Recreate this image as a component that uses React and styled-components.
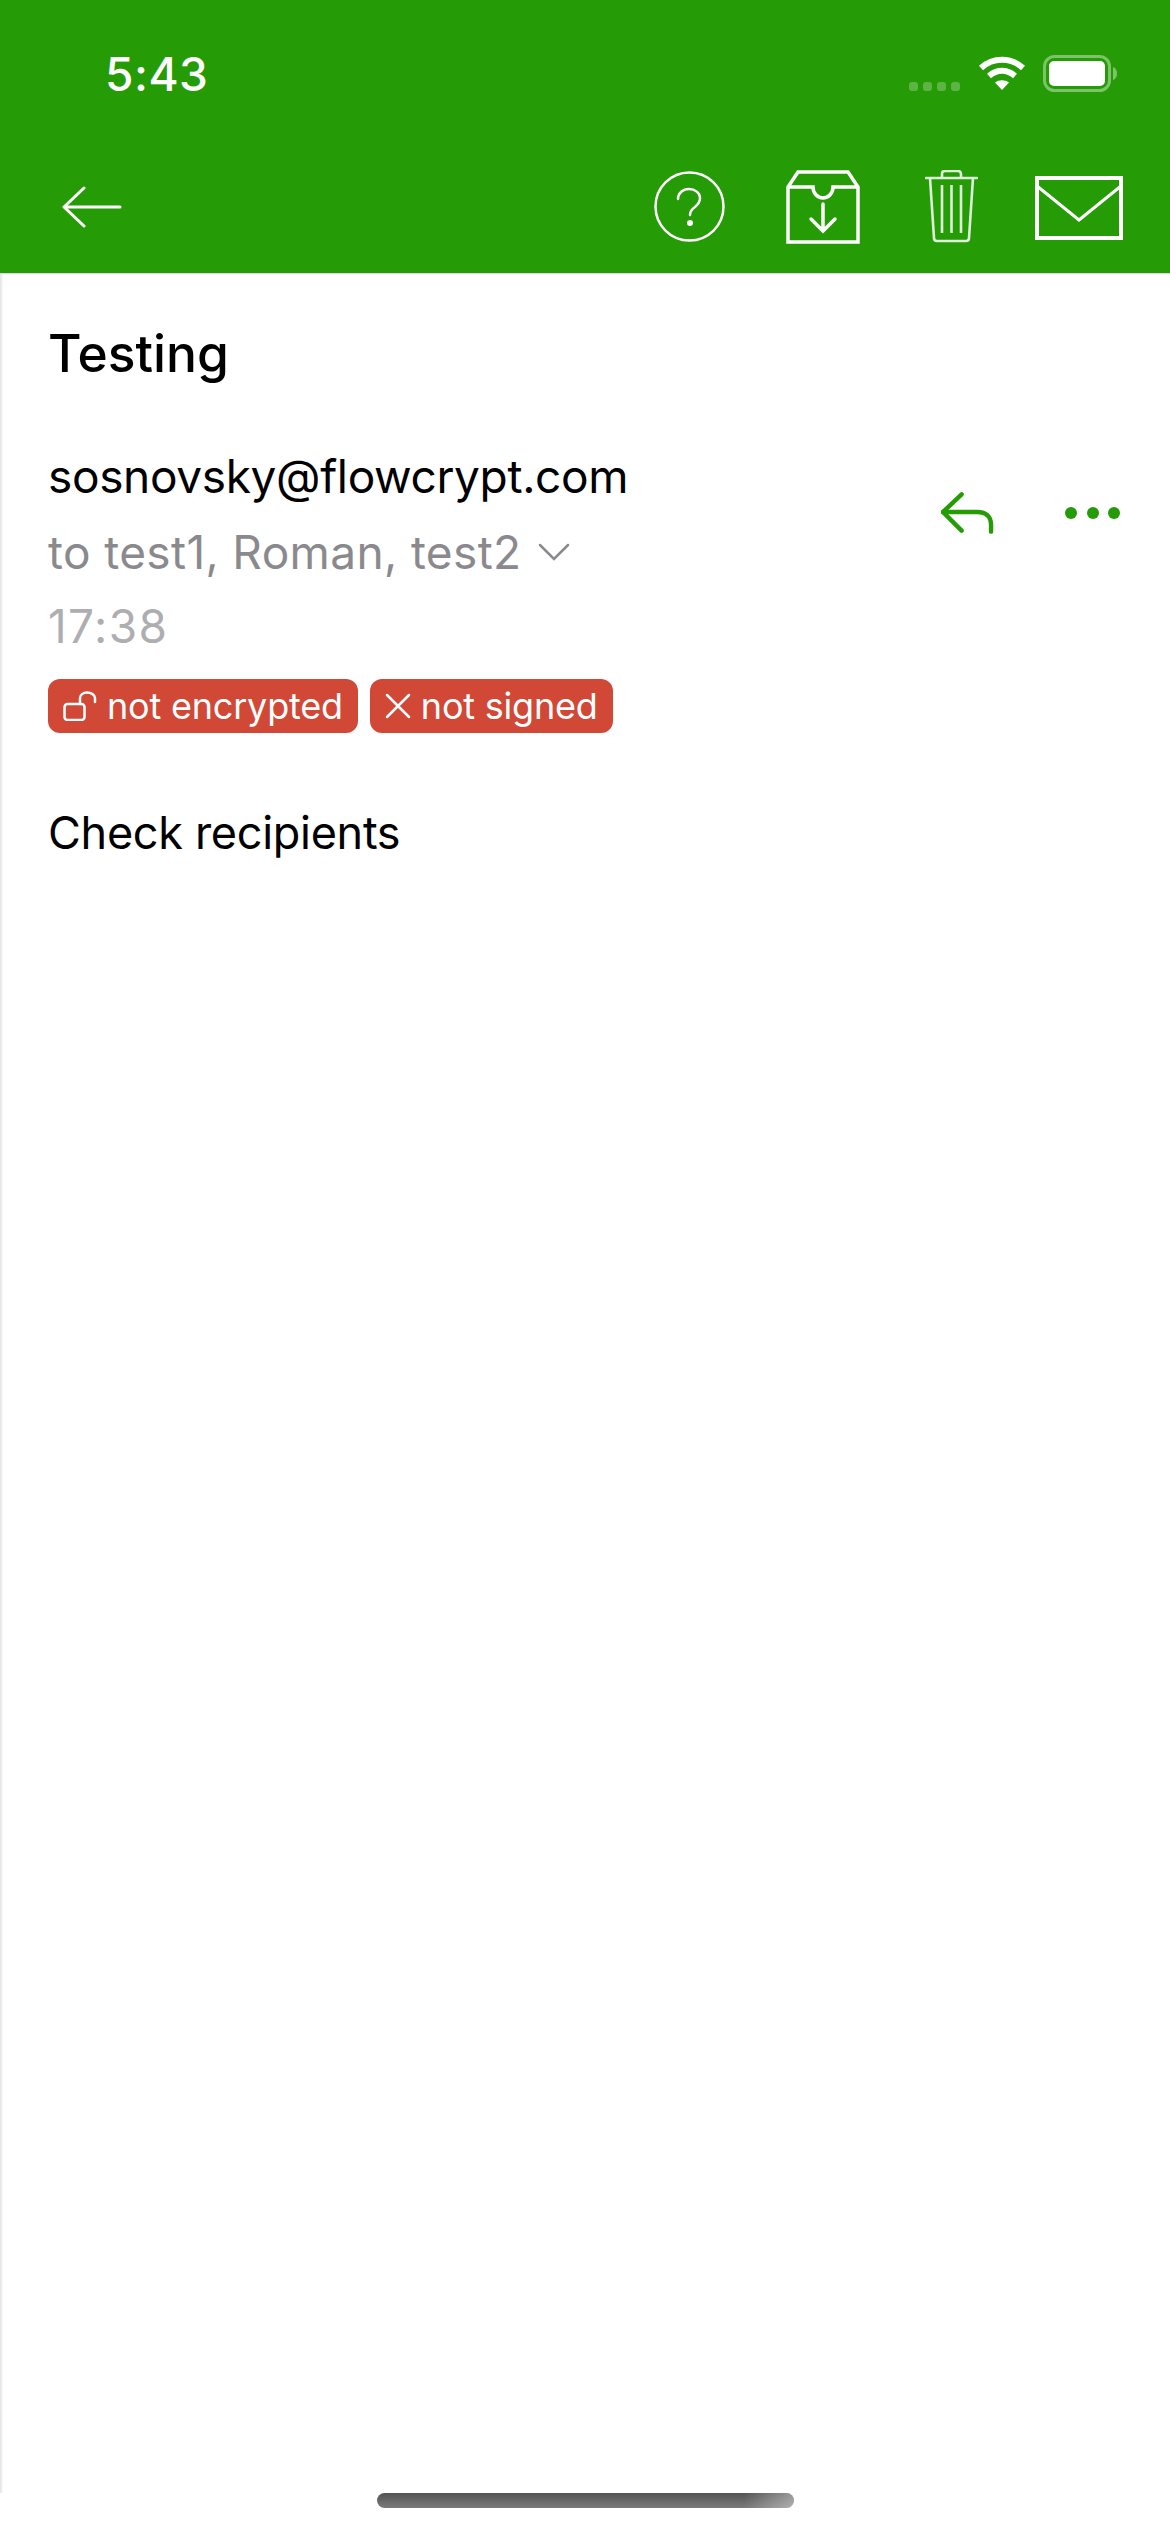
import styled, { createGlobalStyle } from 'styled-components'

const GlobalStyle = createGlobalStyle`
    html, body {
        margin: 0;
        padding: 0;
        background: #fff;
    }
    body {
        font-family: Inter, "Liberation Sans", sans-serif;
    }
`

const Screen = styled.div`
    width: 1170px;
    height: 2532px;
    display: flex;
    flex-direction: column;
    overflow: hidden;
    background: #fff;
`

const Header = styled.header`
    background: #259b06;
    border-bottom: 1px solid #d9d9d9;
    height: 274px;
    box-sizing: border-box;
    color: #fff;
`

const StatusBar = styled.div`
    height: 136px;
    box-sizing: border-box;
    padding: 55px 51px 0 105px;
    display: flex;
    justify-content: space-between;
    align-items: flex-start;
`

const Clock = styled.div`
    font-size: 46px;
    line-height: 38px;
    font-weight: 500;
    letter-spacing: 0.5px;
`

const StatusIcons = styled.div`
    display: flex;
    align-items: flex-start;
    gap: 16px;
`

const NavBar = styled.nav`
    height: 136px;
    box-sizing: border-box;
    padding: 34px 47px 0 62px;
    display: flex;
    align-items: flex-start;
`

const BackButton = styled.div`
    margin-top: 16px;
    margin-right: auto;
    line-height: 0;
`

const NavAction = styled.div`
    margin-left: ${props => props.$gap}px;
    margin-top: ${props => props.$top || 0}px;
    line-height: 0;
`

const Body = styled.main`
    flex: 1;
    display: flex;
    flex-direction: column;
    padding: 52px 49px 0 48px;
    box-shadow: inset 3px 0 2px -1px #e6e6e6;
`

const Subject = styled.h1`
    margin: 0;
    font-size: 51.5px;
    line-height: 54px;
    font-weight: 500;
    color: #000;
`

const SenderRow = styled.div`
    display: flex;
    justify-content: space-between;
    align-items: flex-start;
    margin-top: 63px;
`

const SenderInfo = styled.div`
    display: flex;
    flex-direction: column;
`

const SenderEmail = styled.div`
    font-size: 46px;
    line-height: 66px;
    letter-spacing: -0.35px;
    color: #000;
`

const Recipients = styled.div`
    display: flex;
    align-items: center;
    font-size: 46px;
    line-height: 66px;
    letter-spacing: 0.36px;
    margin-top: 10px;
    color: #8a8a8e;
`

const Chevron = styled.span`
    margin-left: 16px;
    line-height: 0;
`

const Time = styled.div`
    font-size: 46px;
    line-height: 66px;
    letter-spacing: 1.4px;
    margin-top: 8px;
    color: #aeaeb2;
`

const MessageActions = styled.div`
    display: flex;
    align-items: center;
    gap: 71px;
    margin-top: 48px;
`

const Badges = styled.div`
    display: flex;
    gap: 12px;
    margin-top: 20px;
`

const Badge = styled.div`
    display: flex;
    align-items: center;
    height: 54px;
    box-sizing: border-box;
    padding: 0 15px;
    gap: 10px;
    border-radius: 12px;
    background: #d14836;
    color: #fff;
    font-size: 36px;
    letter-spacing: -0.2px;
`

const BadgeIcon = styled.span`
    line-height: 0;
`

const MessageBody = styled.p`
    margin: 67px 0 0 0;
    font-size: 45px;
    line-height: 66px;
    letter-spacing: -0.3px;
    color: #000;
`

const HomeIndicator = styled.div`
    align-self: center;
    width: 417px;
    height: 15px;
    margin-bottom: 24px;
    border-radius: 8px;
    background: linear-gradient(180deg, #545454, #7a7a7a);
    position: relative;
    overflow: hidden;

    &::after {
        content: '';
        position: absolute;
        top: 0;
        right: 0;
        bottom: 0;
        width: 50px;
        background: linear-gradient(90deg, rgba(255,255,255,0), rgba(255,255,255,.4));
    }
`

const BackIcon = () => (
    <svg width="60" height="42" viewBox="0 0 60 42" fill="none" stroke="#fff" strokeWidth="3" strokeLinecap="round" strokeLinejoin="round">
        <path d="M58 21H2M22 2 2 21l20 19" />
    </svg>
)

const HelpIcon = () => (
    <svg width="71" height="71" viewBox="0 0 71 71" fill="none" stroke="#fff" strokeWidth="2.5">
        <circle cx="35.5" cy="35.5" r="34" />
        <path d="M24 28c0-6 5-10 11-10 6 0 11 4 11 9 0 5-3 7-5 9-3 2-5 4-5 8" strokeLinecap="round" />
        <circle cx="36" cy="52" r="3" fill="#fff" stroke="none" />
    </svg>
)

const ArchiveIcon = () => (
    <svg width="74" height="74" viewBox="0 0 74 74" fill="none" stroke="#fff" strokeWidth="3.5">
        <path d="M2 17 12 2h50l10 15v55H2z" />
        <path d="M2 17h25a10 11 0 0 0 20 0h25" />
        <path d="M37 34v27M25 49l12 12 12-12" strokeLinecap="round" />
    </svg>
)

const TrashIcon = () => (
    <svg width="53" height="74" viewBox="0 0 53 74" fill="none" stroke="#fff" strokeWidth="2.6" opacity=".85">
        <path d="M1 8h51" strokeLinecap="round" />
        <path d="M17 8V4c0-2 1-3 3-3h13c2 0 3 1 3 3v4" />
        <path d="M5 8l4 60c0 2 1 3 3 3h29c2 0 3-1 3-3l4-60" />
        <path d="M17 15v48M26.5 15v48M36 15v48" />
    </svg>
)

const MailIcon = () => (
    <svg width="88" height="64" viewBox="0 0 88 64" fill="none" stroke="#fff" strokeWidth="4">
        <rect x="2" y="2" width="84" height="60" />
        <path d="M2 10l42 34 42-34" strokeWidth="3" />
    </svg>
)

const SignalDots = () => (
    <svg width="52" height="10" viewBox="0 0 52 10" fill="#fff" opacity=".25" style={{ marginTop: 27 }}>
        <rect x="0" y="0" width="9" height="9" rx="3" />
        <rect x="14" y="0" width="9" height="9" rx="3" />
        <rect x="28" y="0" width="9" height="9" rx="3" />
        <rect x="42" y="0" width="9" height="9" rx="3" />
    </svg>
)

const WifiIcon = () => (
    <svg width="50" height="36" viewBox="0 0 48 36" fill="none" stroke="#fff" strokeWidth="6">
        <path d="M3 13C15 2 33 2 45 13" />
        <path d="M11 21c8-7 18-7 26 0" />
        <path d="M17 27.5 24 35l7-7.500c-4-3-10-3-14 0z" fill="#fff" stroke="none" />
    </svg>
)

const BatteryIcon = () => (
    <svg width="76" height="38" viewBox="0 0 76 38" fill="none">
        <rect x="1.5" y="1.5" width="65" height="34" rx="10" stroke="#fff" strokeWidth="3" opacity=".4" />
        <rect x="6" y="6" width="56" height="25" rx="5" fill="#fff" />
        <path d="M70 12c3 1 4 4 4 6.5s-1 5.500-4 6.500z" fill="#fff" opacity=".4" />
    </svg>
)

const ChevronIcon = () => (
    <svg width="32" height="18" viewBox="0 0 32 18" fill="none" stroke="#8a8a8e" strokeWidth="2.5" strokeLinecap="round">
        <path d="M2 2l14 14L30 2" />
    </svg>
)

const ReplyIcon = () => (
    <svg width="53" height="44" viewBox="0 0 54 44" fill="none" stroke="#259b06" strokeWidth="4.5" strokeLinecap="round" strokeLinejoin="round">
        <path d="M21 3 2 21l19 19" />
        <path d="M2 21h35c9 0 14 5 14 13v7" />
    </svg>
)

const MoreIcon = () => (
    <svg width="56" height="12" viewBox="0 0 56 12" fill="#259b06">
        <circle cx="6" cy="6" r="6" />
        <circle cx="28" cy="6" r="6" />
        <circle cx="49" cy="6" r="6" />
    </svg>
)

const OpenLockIcon = () => (
    <svg width="34" height="30" viewBox="0 0 34 30" fill="none" stroke="#fff" strokeWidth="2.5">
        <rect x="1.5" y="13" width="20" height="16" rx="3" />
        <path d="M17 13V7c0-3 3-5.500 7-5.500S32 4 32 7v4" strokeLinecap="round" />
    </svg>
)

const CrossIcon = () => (
    <svg width="26" height="26" viewBox="0 0 26 26" fill="none" stroke="#fff" strokeWidth="2.5" strokeLinecap="round">
        <path d="M2 2l22 22M24 2 2 24" />
    </svg>
)

const App = () => {
    return (
        <Screen>
            <GlobalStyle />
            <Header>
                <StatusBar>
                    <Clock>5:43</Clock>
                    <StatusIcons>
                        <SignalDots />
                        <WifiIcon />
                        <BatteryIcon />
                    </StatusIcons>
                </StatusBar>
                <NavBar>
                    <BackButton><BackIcon /></BackButton>
                    <NavAction $gap={0} $top={1}><HelpIcon /></NavAction>
                    <NavAction $gap={61}><ArchiveIcon /></NavAction>
                    <NavAction $gap={65}><TrashIcon /></NavAction>
                    <NavAction $gap={57} $top={6}><MailIcon /></NavAction>
                </NavBar>
            </Header>
            <Body>
                <Subject>Testing</Subject>
                <SenderRow>
                    <SenderInfo>
                        <SenderEmail>sosnovsky@flowcrypt.com</SenderEmail>
                        <Recipients>
                            to test1, Roman, test2
                            <Chevron><ChevronIcon /></Chevron>
                        </Recipients>
                        <Time>17:38</Time>
                    </SenderInfo>
                    <MessageActions>
                        <ReplyIcon />
                        <MoreIcon />
                    </MessageActions>
                </SenderRow>
                <Badges>
                    <Badge>
                        <BadgeIcon><OpenLockIcon /></BadgeIcon>
                        not encrypted
                    </Badge>
                    <Badge>
                        <BadgeIcon><CrossIcon /></BadgeIcon>
                        not signed
                    </Badge>
                </Badges>
                <MessageBody>Check recipients</MessageBody>
            </Body>
            <HomeIndicator />
        </Screen>
    )
}

export default App
